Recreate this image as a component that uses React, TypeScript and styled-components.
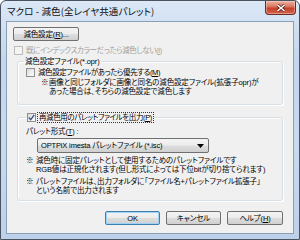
import React from "react";
import styled, { createGlobalStyle, css } from "styled-components";

const Global = createGlobalStyle`
  html, body { margin: 0; padding: 0; background: #ffffff; }
  body {
    font-family: "Liberation Sans", "Noto Sans CJK JP", sans-serif;
    font-size: 7.5px;
    line-height: 9px;
    letter-spacing: -0.15px;
    color: #000;
    font-feature-settings: "palt";
  }
  * { box-sizing: border-box; }
`;

const Window = styled.div`
  width: 300px;
  height: 240px;
  border: 1px solid #4a5360;
  border-radius: 6px 6px 0 0;
  background: linear-gradient(180deg, #dce8f6 0%, #c3d6ee 25%, #c8daf0 60%, #bed1ea 100%);
  display: flex;
  flex-direction: column;
  padding: 0 5px 5px 5px;
  overflow: hidden;
`;

const TitleBar = styled.div`
  height: 20px;
  display: flex;
  align-items: flex-start;
  justify-content: space-between;
`;

const Title = styled.div`
  font-family: "Noto Sans CJK JP", sans-serif;
  font-size: 9.5px;
  line-height: 12px;
  margin-top: 4px;
  margin-left: 1px;
  color: #111;
  letter-spacing: 0.1px;
`;

const CloseButton = styled.div`
  width: 31px;
  height: 14px;
  margin-right: -2px;
  border: 1px solid #6a2b22;
  border-top: none;
  border-radius: 0 0 4px 4px;
  background: linear-gradient(180deg, #eab3a4 0%, #d8735c 45%, #c5412a 55%, #d4604a 100%);
  display: flex;
  align-items: center;
  justify-content: center;
  box-shadow: inset 0 0 0 1px rgba(255, 220, 210, 0.45);
`;

const Client = styled.div`
  flex: 1;
  border: 1px solid #8d9fb5;
  background: #f0f0f0;
  display: flex;
  flex-direction: column;
  padding: 5px 5px 0 5px;
`;

const PushButton = styled.div<{ $w: number; $default?: boolean }>`
  width: ${(p) => p.$w}px;
  height: 14px;
  border: 1px solid ${(p) => (p.$default ? "#3c7fb1" : "#707070")};
  border-radius: 2px;
  background: linear-gradient(180deg, #f4f4f4 0%, #ececec 48%, #dddddd 52%, #d0d0d0 100%);
  display: flex;
  align-items: center;
  justify-content: center;
  line-height: 9px;
  white-space: nowrap;
  ${(p) =>
    p.$default &&
    css`
      box-shadow: inset 0 0 0 1px #9fd3f5;
    `}
`;

const Row = styled.div<{ $mt?: number; $ml?: number }>`
  display: flex;
  align-items: center;
  gap: 3px;
  margin-top: ${(p) => p.$mt ?? 0}px;
  margin-left: ${(p) => p.$ml ?? 0}px;
`;

const Box = styled.span<{ $disabled?: boolean }>`
  width: 9px;
  height: 9px;
  flex: none;
  border: 1px solid ${(p) => (p.$disabled ? "#bcbcbc" : "#8e8f8f")};
  background: ${(p) =>
    p.$disabled
      ? "#f4f4f4"
      : "linear-gradient(135deg, #d8d8d8 0%, #f0f0f0 60%, #fdfdfd 100%)"};
  display: flex;
  align-items: center;
  justify-content: center;
`;

const Label = styled.span<{ $disabled?: boolean; $focus?: boolean }>`
  color: ${(p) => (p.$disabled ? "#a0a0a0" : "#000")};
  white-space: nowrap;
  letter-spacing: -0.4px;
  ${(p) =>
    p.$focus &&
    css`
      outline: 1px dotted #333;
      outline-offset: 0px;
      padding: 0 1px;
    `}
`;

const Group = styled.fieldset<{ $h: number; $mt: number }>`
  margin: ${(p) => p.$mt}px 5px 0 5px;
  height: ${(p) => p.$h}px;
  padding: 0 0 0 8px;
  border: 1px solid #d5dfe5;
  border-radius: 3px;
  box-shadow: inset 1px 1px 0 #fff, 1px 1px 0 #fff;
  min-inline-size: 0;
`;

const Legend = styled.legend<{ $ml: number }>`
  margin-left: ${(p) => p.$ml}px;
  padding: 0 1px;
  line-height: 9px;
  display: flex;
  align-items: center;
  gap: 2px;
`;

const Note = styled.div<{ $mark: number; $mt?: number; $ml?: number }>`
  display: flex;
  margin-top: ${(p) => p.$mt ?? 0}px;
  margin-left: ${(p) => p.$ml ?? 0}px;
  white-space: nowrap;
  & > span:first-child {
    width: ${(p) => p.$mark}px;
    flex: none;
  }
`;

const NoteLines = styled.span`
  display: flex;
  flex-direction: column;
`;

const Combo = styled.div`
  width: 172px;
  height: 15px;
  margin: 2px 0 0 11px;
  border: 1px solid #707070;
  border-radius: 2px;
  background: linear-gradient(180deg, #f4f4f4 0%, #ececec 48%, #dddddd 52%, #d0d0d0 100%);
  display: flex;
  align-items: center;
  justify-content: space-between;
  padding: 0 4px 0 3px;
  white-space: nowrap;
`;

const ButtonBar = styled.div`
  display: flex;
  justify-content: flex-end;
  gap: 6px;
  margin-top: 10px;
`;

const Text = styled.div<{ $mt?: number }>`
  margin-top: ${(p) => p.$mt ?? 0}px;
  white-space: nowrap;
`;

const Check = () => (
  <svg width="7" height="7" viewBox="0 0 7 7">
    <path d="M0.8 3.6 L2.7 5.6 L6.2 1.0" fill="none" stroke="#3f5a8e" strokeWidth="1.4" />
  </svg>
);

export default function App() {
  return (
    <>
      <Global />
      <Window>
        <TitleBar>
          <Title>マクロ - 減色(全レイヤ共通パレット)</Title>
          <CloseButton>
            <svg width="10" height="8" viewBox="0 0 10 8">
              <path d="M1.5 1 L8.5 7 M8.5 1 L1.5 7" stroke="#5a1f14" strokeWidth="3" />
              <path d="M1.5 1 L8.5 7 M8.5 1 L1.5 7" stroke="#ffffff" strokeWidth="1.6" />
            </svg>
          </CloseButton>
        </TitleBar>
        <Client>
          <PushButton $w={66} style={{ marginLeft: 1 }}>
            減色設定(<u>R</u>)...
          </PushButton>
          <Row $mt={5} $ml={2}>
            <Box $disabled />
            <Label $disabled>既にインデックスカラーだったら減色しない(<u>I</u>)</Label>
          </Row>
          <Group $h={48} $mt={2}>
            <Legend $ml={-2}>減色設定ファイル(*.opr)</Legend>
            <Row $mt={2}>
              <Box />
              <Label>減色設定ファイルがあったら優先する(<u>M</u>)</Label>
            </Row>
            <Note $mark={8} $mt={1} $ml={15}>
              <span>※</span>
              <NoteLines>
                <span>画像と同じフォルダに画像と同名の減色設定ファイル(拡張子opr)が</span>
                <span>あった場合は、そちらの減色設定で減色します</span>
              </NoteLines>
            </Note>
          </Group>
          <Group $h={88} $mt={8}>
            <Legend $ml={0}>
              <Box>
                <Check />
              </Box>
              <Label $focus>再減色用のパレットファイルを出力(<u>P</u>)</Label>
            </Legend>
            <Text $mt={5}>
              パレット形式(<u>T</u>) :
            </Text>
            <Combo>
              <span>OPTPiX imesta パレットファイル (*.isc)</span>
              <svg width="7" height="4" viewBox="0 0 7 4">
                <path d="M0 0 L7 0 L3.5 4 Z" fill="#000" />
              </svg>
            </Combo>
            <Note $mark={10} $mt={3}>
              <span>※</span>
              <NoteLines>
                <span>減色時に固定パレットとして使用するためのパレットファイルです</span>
                <span>RGB値は正規化されます(但し形式によっては下位bitが切り捨てられます)</span>
              </NoteLines>
            </Note>
            <Note $mark={10} $mt={3}>
              <span>※</span>
              <NoteLines>
                <span>パレットファイルは、出力フォルダに「ファイル名+パレットファイル拡張子」</span>
                <span>という名前で出力されます</span>
              </NoteLines>
            </Note>
          </Group>
          <ButtonBar>
            <PushButton $w={55} $default>
              OK
            </PushButton>
            <PushButton $w={55}>キャンセル</PushButton>
            <PushButton $w={56} style={{ marginRight: 5 }}>
              ヘルプ(<u>H</u>)
            </PushButton>
          </ButtonBar>
        </Client>
      </Window>
    </>
  );
}
